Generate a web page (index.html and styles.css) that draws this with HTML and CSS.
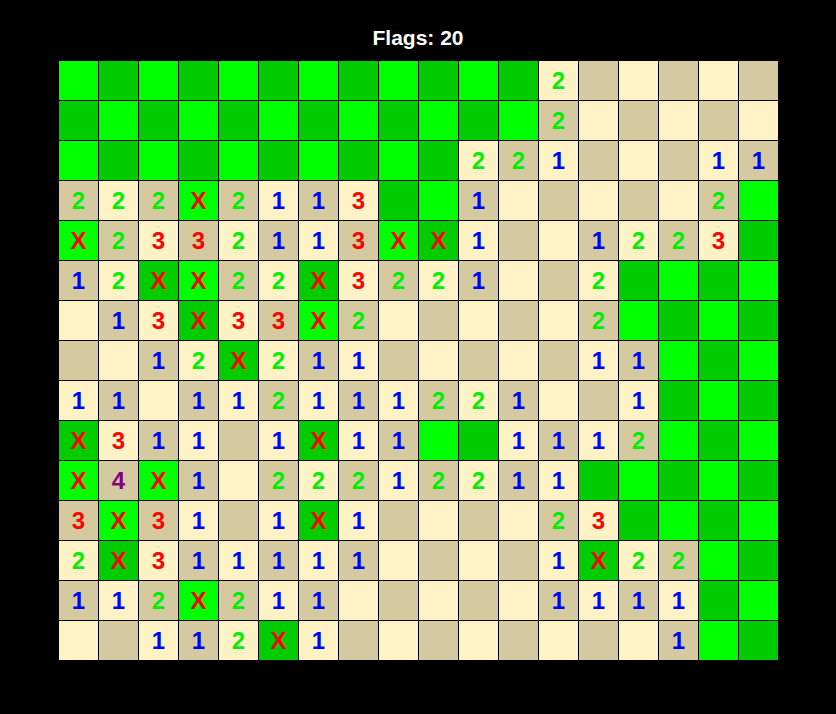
FILE: index.html
```html
<!DOCTYPE html>
<html lang="en">
<head>
<meta charset="utf-8">
<title>Minesweeper</title>
<link rel="stylesheet" href="styles.css">
</head>
<body>
<main class="game">
  <h1 class="flags">Flags: 20</h1>
  <div class="board">
    <!-- row 0 -->
    <div class="c gl"></div><div class="c gd"></div><div class="c gl"></div><div class="c gd"></div><div class="c gl"></div><div class="c gd"></div><div class="c gl"></div><div class="c gd"></div><div class="c gl"></div><div class="c gd"></div><div class="c gl"></div><div class="c gd"></div><div class="c rl n2">2</div><div class="c rd"></div><div class="c rl"></div><div class="c rd"></div><div class="c rl"></div><div class="c rd"></div>
    <!-- row 1 -->
    <div class="c gd"></div><div class="c gl"></div><div class="c gd"></div><div class="c gl"></div><div class="c gd"></div><div class="c gl"></div><div class="c gd"></div><div class="c gl"></div><div class="c gd"></div><div class="c gl"></div><div class="c gd"></div><div class="c gl"></div><div class="c rd n2">2</div><div class="c rl"></div><div class="c rd"></div><div class="c rl"></div><div class="c rd"></div><div class="c rl"></div>
    <!-- row 2 -->
    <div class="c gl"></div><div class="c gd"></div><div class="c gl"></div><div class="c gd"></div><div class="c gl"></div><div class="c gd"></div><div class="c gl"></div><div class="c gd"></div><div class="c gl"></div><div class="c gd"></div><div class="c rl n2">2</div><div class="c rd n2">2</div><div class="c rl n1">1</div><div class="c rd"></div><div class="c rl"></div><div class="c rd"></div><div class="c rl n1">1</div><div class="c rd n1">1</div>
    <!-- row 3 -->
    <div class="c rd n2">2</div><div class="c rl n2">2</div><div class="c rd n2">2</div><div class="c gl fl">X</div><div class="c rd n2">2</div><div class="c rl n1">1</div><div class="c rd n1">1</div><div class="c rl n3">3</div><div class="c gd"></div><div class="c gl"></div><div class="c rd n1">1</div><div class="c rl"></div><div class="c rd"></div><div class="c rl"></div><div class="c rd"></div><div class="c rl"></div><div class="c rd n2">2</div><div class="c gl"></div>
    <!-- row 4 -->
    <div class="c gl fl">X</div><div class="c rd n2">2</div><div class="c rl n3">3</div><div class="c rd n3">3</div><div class="c rl n2">2</div><div class="c rd n1">1</div><div class="c rl n1">1</div><div class="c rd n3">3</div><div class="c gl fl">X</div><div class="c gd fl">X</div><div class="c rl n1">1</div><div class="c rd"></div><div class="c rl"></div><div class="c rd n1">1</div><div class="c rl n2">2</div><div class="c rd n2">2</div><div class="c rl n3">3</div><div class="c gd"></div>
    <!-- row 5 -->
    <div class="c rd n1">1</div><div class="c rl n2">2</div><div class="c gd fl">X</div><div class="c gl fl">X</div><div class="c rd n2">2</div><div class="c rl n2">2</div><div class="c gd fl">X</div><div class="c rl n3">3</div><div class="c rd n2">2</div><div class="c rl n2">2</div><div class="c rd n1">1</div><div class="c rl"></div><div class="c rd"></div><div class="c rl n2">2</div><div class="c gd"></div><div class="c gl"></div><div class="c gd"></div><div class="c gl"></div>
    <!-- row 6 -->
    <div class="c rl"></div><div class="c rd n1">1</div><div class="c rl n3">3</div><div class="c gd fl">X</div><div class="c rl n3">3</div><div class="c rd n3">3</div><div class="c gl fl">X</div><div class="c rd n2">2</div><div class="c rl"></div><div class="c rd"></div><div class="c rl"></div><div class="c rd"></div><div class="c rl"></div><div class="c rd n2">2</div><div class="c gl"></div><div class="c gd"></div><div class="c gl"></div><div class="c gd"></div>
    <!-- row 7 -->
    <div class="c rd"></div><div class="c rl"></div><div class="c rd n1">1</div><div class="c rl n2">2</div><div class="c gd fl">X</div><div class="c rl n2">2</div><div class="c rd n1">1</div><div class="c rl n1">1</div><div class="c rd"></div><div class="c rl"></div><div class="c rd"></div><div class="c rl"></div><div class="c rd"></div><div class="c rl n1">1</div><div class="c rd n1">1</div><div class="c gl"></div><div class="c gd"></div><div class="c gl"></div>
    <!-- row 8 -->
    <div class="c rl n1">1</div><div class="c rd n1">1</div><div class="c rl"></div><div class="c rd n1">1</div><div class="c rl n1">1</div><div class="c rd n2">2</div><div class="c rl n1">1</div><div class="c rd n1">1</div><div class="c rl n1">1</div><div class="c rd n2">2</div><div class="c rl n2">2</div><div class="c rd n1">1</div><div class="c rl"></div><div class="c rd"></div><div class="c rl n1">1</div><div class="c gd"></div><div class="c gl"></div><div class="c gd"></div>
    <!-- row 9 -->
    <div class="c gd fl">X</div><div class="c rl n3">3</div><div class="c rd n1">1</div><div class="c rl n1">1</div><div class="c rd"></div><div class="c rl n1">1</div><div class="c gd fl">X</div><div class="c rl n1">1</div><div class="c rd n1">1</div><div class="c gl"></div><div class="c gd"></div><div class="c rl n1">1</div><div class="c rd n1">1</div><div class="c rl n1">1</div><div class="c rd n2">2</div><div class="c gl"></div><div class="c gd"></div><div class="c gl"></div>
    <!-- row 10 -->
    <div class="c gl fl">X</div><div class="c rd n4">4</div><div class="c gl fl">X</div><div class="c rd n1">1</div><div class="c rl"></div><div class="c rd n2">2</div><div class="c rl n2">2</div><div class="c rd n2">2</div><div class="c rl n1">1</div><div class="c rd n2">2</div><div class="c rl n2">2</div><div class="c rd n1">1</div><div class="c rl n1">1</div><div class="c gd"></div><div class="c gl"></div><div class="c gd"></div><div class="c gl"></div><div class="c gd"></div>
    <!-- row 11 -->
    <div class="c rd n3">3</div><div class="c gl fl">X</div><div class="c rd n3">3</div><div class="c rl n1">1</div><div class="c rd"></div><div class="c rl n1">1</div><div class="c gd fl">X</div><div class="c rl n1">1</div><div class="c rd"></div><div class="c rl"></div><div class="c rd"></div><div class="c rl"></div><div class="c rd n2">2</div><div class="c rl n3">3</div><div class="c gd"></div><div class="c gl"></div><div class="c gd"></div><div class="c gl"></div>
    <!-- row 12 -->
    <div class="c rl n2">2</div><div class="c gd fl">X</div><div class="c rl n3">3</div><div class="c rd n1">1</div><div class="c rl n1">1</div><div class="c rd n1">1</div><div class="c rl n1">1</div><div class="c rd n1">1</div><div class="c rl"></div><div class="c rd"></div><div class="c rl"></div><div class="c rd"></div><div class="c rl n1">1</div><div class="c gd fl">X</div><div class="c rl n2">2</div><div class="c rd n2">2</div><div class="c gl"></div><div class="c gd"></div>
    <!-- row 13 -->
    <div class="c rd n1">1</div><div class="c rl n1">1</div><div class="c rd n2">2</div><div class="c gl fl">X</div><div class="c rd n2">2</div><div class="c rl n1">1</div><div class="c rd n1">1</div><div class="c rl"></div><div class="c rd"></div><div class="c rl"></div><div class="c rd"></div><div class="c rl"></div><div class="c rd n1">1</div><div class="c rl n1">1</div><div class="c rd n1">1</div><div class="c rl n1">1</div><div class="c gd"></div><div class="c gl"></div>
    <!-- row 14 -->
    <div class="c rl"></div><div class="c rd"></div><div class="c rl n1">1</div><div class="c rd n1">1</div><div class="c rl n2">2</div><div class="c gd fl">X</div><div class="c rl n1">1</div><div class="c rd"></div><div class="c rl"></div><div class="c rd"></div><div class="c rl"></div><div class="c rd"></div><div class="c rl"></div><div class="c rd"></div><div class="c rl"></div><div class="c rd n1">1</div><div class="c gl"></div><div class="c gd"></div>
  </div>
</main>
</body>
</html>
```

FILE: styles.css
```css
html,
body {
  margin: 0;
  padding: 0;
  background: #000;
}

body {
  width: 836px;
  height: 714px;
  overflow: hidden;
  font-family: "Liberation Sans", Arial, Helvetica, sans-serif;
}

.game {
  display: flex;
  flex-direction: column;
  align-items: center;
  padding-top: 26px;
}

.flags {
  margin: 0 0 10px;
  height: 24px;
  font-size: 21px;
  line-height: 24px;
  font-weight: bold;
  color: #fff;
}

.board {
  display: grid;
  grid-template-columns: repeat(18, 39px);
  grid-auto-rows: 39px;
  gap: 1px;
  padding: 1px 0 0 1px;
  background: #000;
}

.c {
  font-size: 24px;
  font-weight: bold;
  line-height: 39px;
  text-align: center;
}

.gl { background: #00ff00; }
.gd { background: #00cc00; }
.rl { background: #fff3c6; }
.rd { background: #d5c99f; }

.n1 { color: #0000ff; }
.n2 { color: #00ee00; }
.n3 { color: #ff0000; }
.n4 { color: #800080; }
.fl { color: #ff0000; }
```
